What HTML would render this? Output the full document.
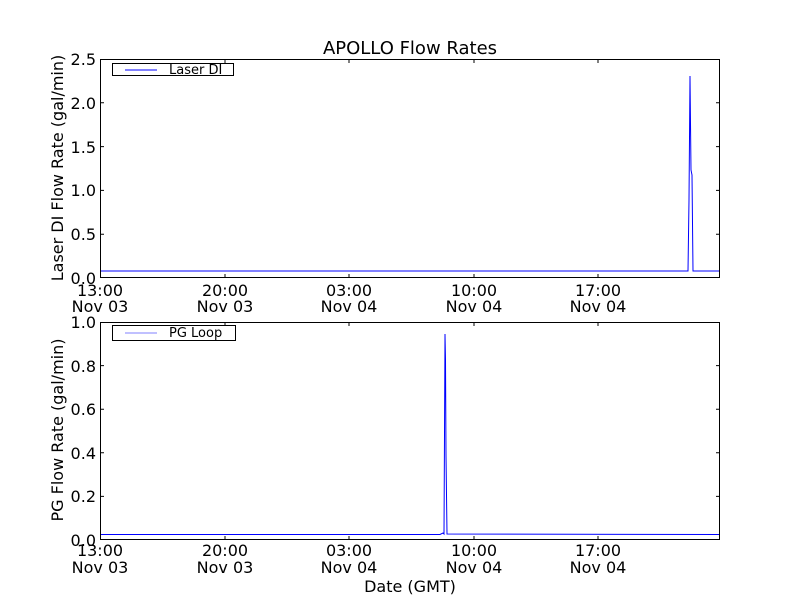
<!DOCTYPE html>
<html><head><style>body{margin:0;background:#fff}svg{display:block}text{font-family:"DejaVu Sans","Liberation Sans",sans-serif;fill:#000}</style></head><body>
<svg width="800" height="600" xmlns="http://www.w3.org/2000/svg">
<rect width="800" height="600" fill="#fff"/>
<text x="410" y="54" font-size="18" text-anchor="middle">APOLLO Flow Rates</text>
<!-- top axes -->
<g stroke="#0000ff" fill="none" stroke-width="1">
<polyline points="100,271 688,271 689,200 690,76 691,170 692,175 693,271 720,271"/>
<polyline points="100,534.5 440,534.5 443,533 444,534 445,334 445.5,360 446,455 447,534 720,534.5" />
</g>
<g stroke="#000" fill="none" stroke-width="1">
<rect x="100.5" y="59.5" width="619" height="218"/>
<rect x="100.5" y="322.5" width="619" height="217"/>
</g>
<g stroke="#000" stroke-width="1">
<path d="M100 234.2h4M100 190.4h4M100 146.6h4M100 102.8h4M716 234.2h4M716 190.4h4M716 146.6h4M716 102.8h4"/>
<path d="M225 278v-4M349 278v-4M474 278v-4M598 278v-4M225 59v4M349 59v4M474 59v4M598 59v4"/>
<path d="M100 496.4h4M100 452.8h4M100 409.2h4M100 365.6h4M716 496.4h4M716 452.8h4M716 409.2h4M716 365.6h4"/>
<path d="M225 540v-4M349 540v-4M474 540v-4M598 540v-4M225 322v4M349 322v4M474 322v4M598 322v4"/>
</g>
<g font-size="16" text-anchor="end">
<text x="96" y="284">0.0</text><text x="96" y="240">0.5</text><text x="96" y="196">1.0</text><text x="96" y="153">1.5</text><text x="96" y="109">2.0</text><text x="96" y="65">2.5</text>
<text x="96" y="546">0.0</text><text x="96" y="502">0.2</text><text x="96" y="459">0.4</text><text x="96" y="415">0.6</text><text x="96" y="372">0.8</text><text x="96" y="328">1.0</text>
</g>
<g font-size="16" text-anchor="middle">
<text x="100" y="296">13:00</text><text x="100" y="312">Nov 03</text>
<text x="225" y="296">20:00</text><text x="225" y="312">Nov 03</text>
<text x="349" y="296">03:00</text><text x="349" y="312">Nov 04</text>
<text x="474" y="296">10:00</text><text x="474" y="312">Nov 04</text>
<text x="598" y="296">17:00</text><text x="598" y="312">Nov 04</text>
<text x="100" y="556">13:00</text><text x="100" y="573">Nov 03</text>
<text x="225" y="556">20:00</text><text x="225" y="573">Nov 03</text>
<text x="349" y="556">03:00</text><text x="349" y="573">Nov 04</text>
<text x="474" y="556">10:00</text><text x="474" y="573">Nov 04</text>
<text x="598" y="556">17:00</text><text x="598" y="573">Nov 04</text>
<text x="410" y="592">Date (GMT)</text>
<text transform="translate(63,168) rotate(-90)">Laser DI Flow Rate (gal/min)</text>
<text transform="translate(63,430) rotate(-90)">PG Flow Rate (gal/min)</text>
</g>
<rect x="112.5" y="63.5" width="121" height="12" fill="#fff" stroke="#000"/>
<line x1="125" y1="70" x2="157" y2="70" stroke="#0000ff"/>
<text x="169" y="74" font-size="13">Laser DI</text>
<rect x="112.5" y="325.5" width="123" height="15" fill="#fff" stroke="#000"/>
<line x1="125" y1="333" x2="157" y2="333" stroke="#8080ff"/>
<text x="169" y="337" font-size="13">PG Loop</text>
</svg>
</body></html>
